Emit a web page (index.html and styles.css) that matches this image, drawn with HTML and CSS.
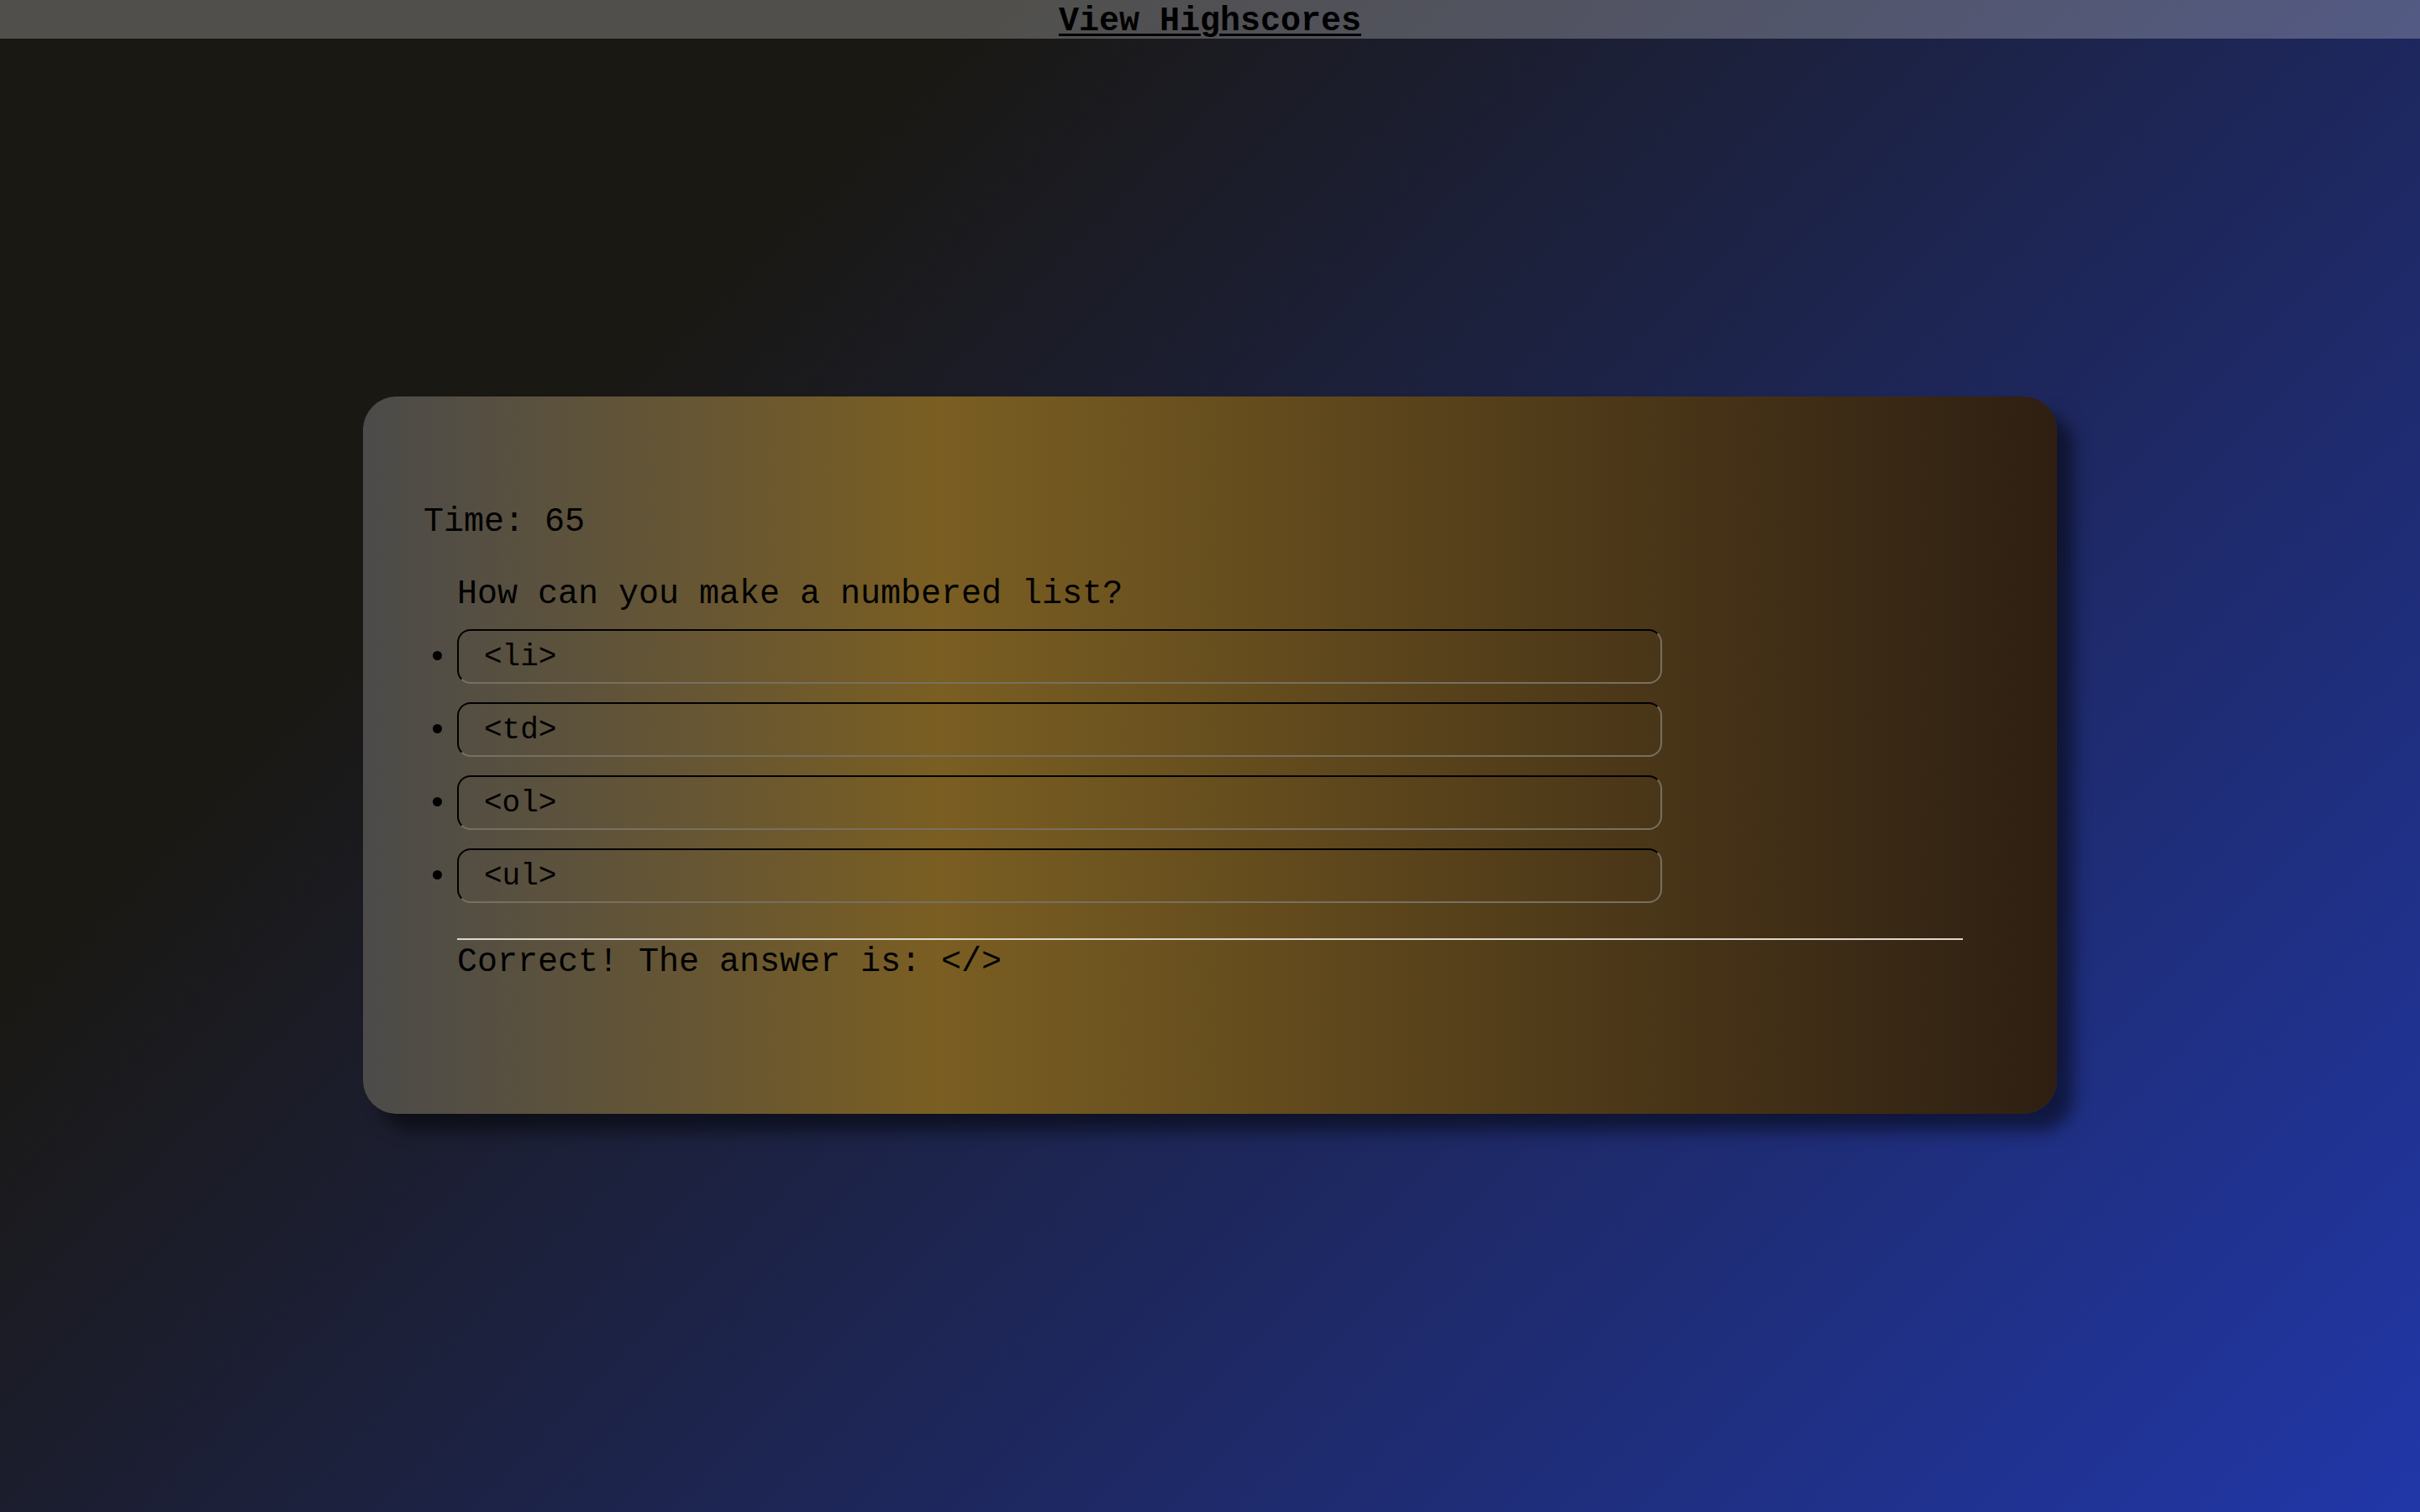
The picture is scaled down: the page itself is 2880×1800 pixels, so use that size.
FILE: index.html
```html
<!DOCTYPE html>
<html lang="en">
<head>
<meta charset="utf-8">
<title>Code Quiz</title>
<link rel="stylesheet" href="styles.css">
</head>
<body>
<header class="topbar">
  <a class="scores-link" href="#">View Highscores</a>
</header>
<main class="stage">
  <section class="card">
    <p class="timer">Time: 65</p>
    <div class="quiz">
      <p class="question">How can you make a numbered list?</p>
      <ul class="choices">
        <li class="choice"><button class="choice-btn">&lt;li&gt;</button></li>
        <li class="choice"><button class="choice-btn">&lt;td&gt;</button></li>
        <li class="choice"><button class="choice-btn">&lt;ol&gt;</button></li>
        <li class="choice"><button class="choice-btn">&lt;ul&gt;</button></li>
      </ul>
      <hr class="divider">
      <p class="feedback">Correct! The answer is: &lt;/&gt;</p>
    </div>
  </section>
</main>
</body>
</html>
```

FILE: styles.css
```css
html, body {
  margin: 0;
  padding: 0;
}

body {
  min-height: 100vh;
  font-family: "Liberation Mono", "Courier New", monospace;
  font-size: 40px;
  color: #000;
  background: linear-gradient(135deg, #1a1813 25%, #2137a8 100%);
}

.topbar {
  height: 46px;
  box-sizing: border-box;
  padding-top: 5px;
  background: rgba(255, 255, 255, 0.24);
  text-align: center;
  line-height: 41px;
}

.scores-link {
  color: #000;
  font-weight: bold;
  text-decoration: underline;
  text-decoration-thickness: 3px;
  text-underline-offset: 4px;
}

.stage {
  padding-top: 426px;
}

.card {
  width: 70%;
  height: 854px;
  box-sizing: border-box;
  margin: 0 auto;
  padding: 72px;
  border-radius: 40px;
  background: linear-gradient(90deg, #4c4b4a 0%, #7a5e22 34%, #2e1f12 100%);
  box-shadow: 20px 20px 20px rgba(0, 0, 0, 0.5);
}

.timer {
  margin: 55px 0 0;
  line-height: 45px;
}

.quiz {
  padding: 0 40px;
}

.question {
  margin: 41px 0 19px;
  line-height: 45px;
}

.choices {
  margin: 0;
  padding: 0;
  list-style: disc outside;
}

.choice {
  margin: 0 0 22px;
}

.choice-btn {
  width: 80%;
  box-sizing: border-box;
  padding: 11px 30px 9px;
  font-family: "Liberation Mono", "Courier New", monospace;
  font-size: 36px;
  line-height: 41px;
  color: #000;
  text-align: left;
  background: transparent;
  border: 2px solid;
  border-color: #000 #77705f #77705f #000;
  border-radius: 16px;
}

.divider {
  margin: 42px 0 0;
  height: 2px;
  border: none;
  background: #dcd6cc;
}

.feedback {
  margin: 4px 0 0;
  line-height: 45px;
}
```
